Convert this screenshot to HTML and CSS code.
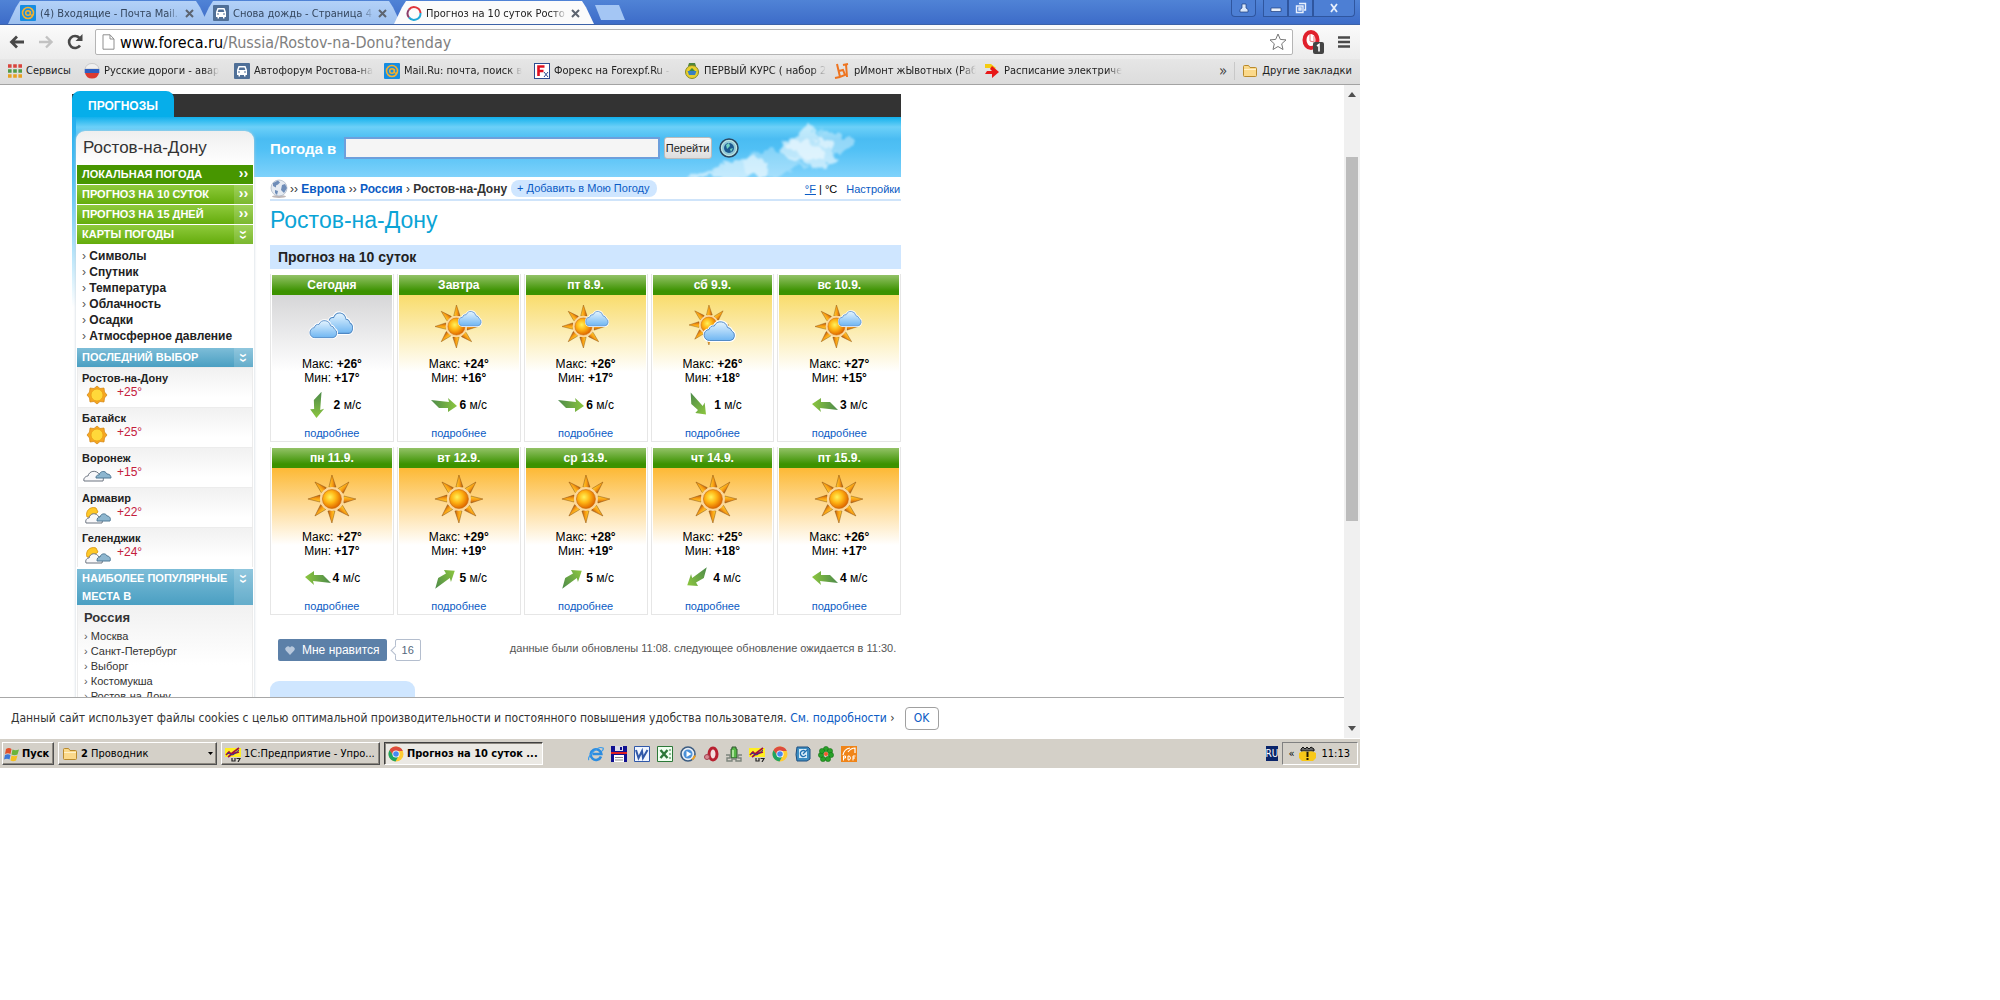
FILE: index.html
```html
<!DOCTYPE html>
<html lang="ru">
<head>
    <meta charset="UTF-8">
    <meta name="viewport" content="width=device-width, initial-scale=1.0">
    <title>Прогноз на 10 суток Ростов-на-Дону</title>
    <link rel="stylesheet" href="styles.css">
</head>
<body>
    <!-- shared icons -->
    <svg class="defs" width="0" height="0" aria-hidden="true">
        <defs>
            <radialGradient id="gSun" cx="0.4" cy="0.4" r="0.6"><stop offset="0" stop-color="#fff25a"/><stop offset="0.5" stop-color="#ffb414"/><stop offset="1" stop-color="#e06a00"/></radialGradient>
            <linearGradient id="gCloud" x1="0" y1="0" x2="0" y2="1"><stop offset="0" stop-color="#e4f4ff"/><stop offset="1" stop-color="#6fb6f2"/></linearGradient>
            <linearGradient id="gArrow" x1="0" y1="0" x2="1" y2="0"><stop offset="0" stop-color="#4d8a4a"/><stop offset="1" stop-color="#8cc63f"/></linearGradient>
            <linearGradient id="gRay" x1="0" y1="0" x2="1" y2="0"><stop offset="0" stop-color="#ffd02e"/><stop offset="0.55" stop-color="#f79a12"/><stop offset="1" stop-color="#b45a10"/></linearGradient>
            <filter id="wisp" x="-10%" y="-10%" width="120%" height="120%">
                <feTurbulence type="fractalNoise" baseFrequency="0.09" numOctaves="3" seed="4"/>
                <feDisplacementMap in="SourceGraphic" scale="14" xChannelSelector="R" yChannelSelector="G"/>
                <feGaussianBlur stdDeviation="1"/>
            </filter>
        </defs>
        <symbol id="sun" viewBox="0 0 48 48">
            <path id="r1" d="M24 0l4 12q-4 2-7 0z" fill="url(#gRay)" stroke="#8a5010" stroke-width=".5"/>
            <use href="#r1" transform="rotate(45 24 24)"/><use href="#r1" transform="rotate(90 24 24)"/><use href="#r1" transform="rotate(135 24 24)"/><use href="#r1" transform="rotate(180 24 24)"/><use href="#r1" transform="rotate(225 24 24)"/><use href="#r1" transform="rotate(270 24 24)"/><use href="#r1" transform="rotate(315 24 24)"/>
            <circle cx="24" cy="24" r="12" fill="#fbd79a"/>
            <circle cx="24" cy="24" r="9.500" fill="url(#gSun)" stroke="#c8690a" stroke-width=".6"/>
        </symbol>
        <symbol id="cloud" viewBox="0 0 36 22" preserveAspectRatio="none">
            <path d="M7 20.500a5.500 5.500 0 0 1-.5-11A5 5 0 0 1 12 6a7.500 7.500 0 0 1 14 1.500 5 5 0 0 1 4.500 3.500 5 5 0 0 1-1.500 9.500z" fill="url(#gCloud)" stroke="#fff" stroke-width="3"/>
            <path d="M7 20.500a5.500 5.500 0 0 1-.5-11A5 5 0 0 1 12 6a7.500 7.500 0 0 1 14 1.500 5 5 0 0 1 4.500 3.500 5 5 0 0 1-1.500 9.500z" fill="url(#gCloud)" stroke="#4f88c4" stroke-width="1"/>
        </symbol>
        <symbol id="w-clouds" viewBox="0 0 48 48">
            <use href="#cloud" x="15" y="9" width="32" height="24"/>
            <use href="#cloud" x="1" y="17" width="30" height="20"/>
        </symbol>
        <symbol id="w-fair" viewBox="0 0 48 48">
            <use href="#sun" x="0" y="3" width="43" height="43"/>
            <use href="#cloud" x="23" y="8" width="25" height="17"/>
        </symbol>
        <symbol id="w-partly" viewBox="0 0 48 48">
            <use href="#sun" x="0" y="3" width="40" height="40"/>
            <use href="#cloud" x="14" y="18" width="34" height="22"/>
        </symbol>
        <symbol id="arrow" viewBox="0 0 28 28"><path d="M1 9l18 2-1-4 9 8-9 6v-4l-9 0z" fill="url(#gArrow)"/></symbol>
        <symbol id="s-sun" viewBox="0 0 30 20">
            <path d="M15 1l3 2.500 4-.5.5 4 2.500 3-2.500 3-.5 4-4-.5-3 2.500-3-2.500-4 .5-.5-4-2.500-3 2.500-3 .5-4 4 .5z" fill="#f5a623" stroke="#d18410" stroke-width=".7"/>
            <circle cx="15" cy="10" r="6" fill="#ffd83a" stroke="#e89a10" stroke-width=".7"/>
        </symbol>
        <symbol id="s-clouds" viewBox="0 0 30 20">
            <path d="M2 16c-1-3 2-5 4-5 1-5 8-7 12-1 3 0 4 3 3 6z" fill="#f8f8fa" stroke="#6c7480" stroke-width="1"/>
            <path d="M14 13c0-3 2-3 3-3 1-4 6-5 8-1 3 0 4 2 4 4z" fill="#8db6cf" stroke="#4f7894" stroke-width="1"/>
        </symbol>
        <symbol id="s-partly" viewBox="0 0 30 20">
            <path d="M5 12c-2-6 3-11 9-9l2 4-6 5z" fill="#ffc928" stroke="#d6920c" stroke-width=".8"/>
            <path d="M4 18c-1-3 1-5 3-5 1-5 7-6 10-1 3 0 4 3 3 6z" fill="#f8f8fa" stroke="#6c7480"/>
            <path d="M15 16c0-3 1-4 3-4 1-4 6-4 7-1 3 0 4 3 3 5z" fill="#8db6cf" stroke="#4f7894"/>
        </symbol>
        <symbol id="mailru" viewBox="0 0 16 16"><rect width="16" height="16" rx="1" fill="#168de2"/><circle cx="8" cy="8" r="5.500" fill="none" stroke="#f5b12e" stroke-width="1.600"/><circle cx="8" cy="8" r="2.300" fill="none" stroke="#f5b12e" stroke-width="1.500"/><path d="M10.500 6v3.500q1 1.500 2.500 0" fill="none" stroke="#f5b12e" stroke-width="1.300"/></symbol>
        <symbol id="car" viewBox="0 0 16 16"><rect width="16" height="16" rx="1" fill="#4f6f97"/><path d="M4.500 3h7l1.500 4v5h-1.500v1.500H10V12H6v1.500H4.500V12H3V7z" fill="#fff"/><path d="M5.500 4.500h5l.8 2.500H4.700z" fill="#4f6f97"/><path d="M4 9h2M10 9h2" stroke="#4f6f97"/></symbol>
        <symbol id="chrome" viewBox="0 0 16 16"><circle cx="8" cy="8" r="7.500" fill="#fc3"/><path d="M1.500 4.200A7.500 7.500 0 0 1 14.800 5H8L5 9.500z" fill="#dd4b3e"/><path d="M1.500 4.200A7.500 7.500 0 0 0 7.500 15.500L10.500 10 5 9z" fill="#1da462"/><circle cx="8" cy="8" r="3.600" fill="#fff"/><circle cx="8" cy="8" r="2.800" fill="#4688f1"/></symbol>
        <symbol id="folder" viewBox="0 0 16 16"><path d="M1.500 3.500q0-1 1-1h4l1.500 2h5.500q1 0 1 1v7q0 1-1 1h-11q-1 0-1-1z" fill="#fbd98a" stroke="#b98a2c"/><path d="M2 6.500h12" stroke="#fff1c8"/></symbol>
        <symbol id="onec" viewBox="0 0 16 16"><path d="M0 2h16v9H0z" fill="#ffee22"/><path d="M1 9l3-3 2 2 8-6M3 11l4-3 7-2" fill="none" stroke="#a01040" stroke-width="1.700"/><path d="M2 7l6 2 6-5" fill="none" stroke="#303090"/><path d="M7 12v3h3v-3M11.500 12.500H15L13 16" fill="none" stroke="#222" stroke-width="1.200"/></symbol>
    </svg>

    <div class="screen">
        <header class="titlebar">
            <div class="tab">
                <svg width="16" height="16"><use href="#mailru"/></svg>
                <span class="tab-text">(4) Входящие - Почта Mail.</span>
                <button class="tab-close" aria-label="Закрыть"><svg width="9" height="9" viewBox="0 0 9 9"><path d="M1 1l7 7M8 1L1 8" stroke="#5c6470" stroke-width="2"/></svg></button>
            </div>
            <div class="tab">
                <svg width="16" height="16"><use href="#car"/></svg>
                <span class="tab-text">Снова дождь - Страница 4</span>
                <button class="tab-close" aria-label="Закрыть"><svg width="9" height="9" viewBox="0 0 9 9"><path d="M1 1l7 7M8 1L1 8" stroke="#5c6470" stroke-width="2"/></svg></button>
            </div>
            <div class="tab active">
                <svg width="16" height="16" viewBox="0 0 16 16"><path d="M3 4.500A6.500 6.500 0 0 1 14.500 8" fill="none" stroke="#e0343c" stroke-width="2"/><path d="M14.500 8A6.500 6.500 0 0 1 3 12.500" fill="none" stroke="#1fa8d8" stroke-width="2"/><path d="M3 12.500a6.500 6.500 0 0 1 0-8" fill="none" stroke="#8a3c6a" stroke-width="2"/></svg>
                <span class="tab-text">Прогноз на 10 суток Росто</span>
                <button class="tab-close" aria-label="Закрыть"><svg width="9" height="9" viewBox="0 0 9 9"><path d="M1 1l7 7M8 1L1 8" stroke="#5c6470" stroke-width="2"/></svg></button>
            </div>
            <button class="new-tab" aria-label="Новая вкладка"></button>
            <div class="window-buttons">
                <button class="win user" aria-label="Профиль"><svg width="10" height="10" viewBox="0 0 10 10"><path d="M3 1h4v4l2 1.500V9H1V6.500L3 5z" fill="#dbe8fb" stroke="#1c3c7c" stroke-width=".7"/></svg></button>
                <button class="win" aria-label="Свернуть"><svg width="12" height="10" viewBox="0 0 12 10"><path d="M1 5h10v3.500H1z" fill="#e8f0fc" stroke="#1c3c7c" stroke-width=".7"/></svg></button>
                <button class="win" aria-label="Восстановить"><svg width="12" height="12" viewBox="0 0 12 12"><path d="M4 1.500h6.500V8H9M1.500 4H8v6.500H1.500zM4 6h2v2H4z" fill="none" stroke="#e8f0fc" stroke-width="1.400"/></svg></button>
                <button class="win close" aria-label="Закрыть окно"><svg width="10" height="10" viewBox="0 0 10 10"><path d="M2 1l6 8M8 1L2 9" stroke="#e8f0fc" stroke-width="1.800"/></svg></button>
            </div>
        </header>

        <div class="toolbar">
            <button class="nav-btn" aria-label="Назад"><svg width="18" height="18" viewBox="0 0 18 18"><path d="M16 9H3.500M9 3.500L3.500 9 9 14.500" fill="none" stroke="#484848" stroke-width="2.800"/></svg></button>
            <button class="nav-btn" aria-label="Вперёд"><svg width="18" height="18" viewBox="0 0 18 18"><path d="M2 9h12.500M9 3.500l5.500 5.500L9 14.500" fill="none" stroke="#c2c2c2" stroke-width="2.400"/></svg></button>
            <button class="nav-btn" aria-label="Обновить"><svg width="18" height="18" viewBox="0 0 18 18"><path d="M14 12.500A6 6 0 1 1 13.500 5" fill="none" stroke="#484848" stroke-width="2.600"/><path d="M16.500 1v7h-7z" fill="#484848"/></svg></button>
            <div class="urlbar">
                <svg width="13" height="16" viewBox="0 0 13 16"><path d="M1 .8h7L12 5v10.200H1zM8 .8V5h4" fill="#fff" stroke="#8f8f8f"/></svg>
                <a class="url" href="#">www.foreca.ru<span>/Russia/Rostov-na-Donu?tenday</span></a>
                <svg width="18" height="18" viewBox="0 0 18 18"><path d="M9 1l2.300 5.400 5.700.5-4.300 3.900 1.300 5.700L9 13.500l-5 3 1.300-5.700L1 6.900l5.700-.5z" fill="#fff" stroke="#777"/></svg>
            </div>
            <button class="nav-btn ext" aria-label="Расширение"><svg width="24" height="24" viewBox="0 0 24 24"><ellipse cx="10" cy="10" rx="6.500" ry="8" fill="#fff" stroke="#e0202c" stroke-width="4"/><path d="M9 4v7l4 1V6" fill="#fff" stroke="#e87078"/><rect x="12" y="12" width="11" height="12" rx="2" fill="#444"/><path d="M16 16l2-1.500v7" fill="none" stroke="#fff" stroke-width="1.600"/></svg></button>
            <button class="nav-btn menu" aria-label="Меню"><svg width="14" height="14" viewBox="0 0 14 14"><path d="M1 2.500h12M1 7h12M1 11.500h12" stroke="#4a4a4a" stroke-width="2.600"/></svg></button>
        </div>

        <nav class="bookmarks">
            <a class="apps" href="#"><svg width="14" height="14" viewBox="0 0 14 14"><path d="M0 2h14" stroke="#d9443c" stroke-width="3.600" stroke-dasharray="3.600 1.600"/><path d="M0 7h14" stroke="#4f9a48" stroke-width="3.600" stroke-dasharray="3.600 1.600"/><path d="M0 12h14" stroke="#e8a020" stroke-width="3.600" stroke-dasharray="3.600 1.600"/></svg><span>Сервисы</span></a>
            <a href="#"><svg width="16" height="16" viewBox="0 0 16 16"><path d="M1 6a7.200 7.200 0 0 1 14 0z" fill="#f0f0f0" stroke="#aaa" stroke-width=".5"/><path d="M.7 6h14.600v4H.7z" fill="#2f5fc0"/><path d="M1 10h14a7.200 7.200 0 0 1-14 0z" fill="#dc3a30"/></svg><span>Русские дороги - авар</span></a>
            <a href="#"><svg width="16" height="16"><use href="#car"/></svg><span>Автофорум Ростова-на</span></a>
            <a href="#"><svg width="16" height="16"><use href="#mailru"/></svg><span>Mail.Ru: почта, поиск в</span></a>
            <a href="#"><svg width="16" height="16" viewBox="0 0 16 16"><rect x=".5" y=".5" width="15" height="15" fill="#fff" stroke="#2c4c90"/><path d="M4.500 13V3.500h6M4.500 8h5" fill="none" stroke="#e01020" stroke-width="2.600"/><path d="M10 9l4 5M14 9l-4 5" stroke="#2c4c90"/></svg><span>Форекс на Forexpf.Ru -</span></a>
            <a href="#"><svg width="16" height="16" viewBox="0 0 16 16"><path d="M5 0h6l1 3H4z" fill="#50853c"/><circle cx="8" cy="9" r="6.500" fill="#e9cf2d" stroke="#8a8a20"/><path d="M3.500 8h9l-1.500 4H5z" fill="#3a80c0"/><path d="M8 5l3 3H5z" fill="#3c8a40"/></svg><span>ПЕРВЫЙ КУРС ( набор 2</span></a>
            <a href="#"><svg width="16" height="16" viewBox="0 0 16 16"><path d="M3 1l3 13 5-2-2-5-4 1M12 1l1 13M9 2l5-1M1 15l5-1" fill="none" stroke="#ee7420" stroke-width="2"/></svg><span>рИмонт жЫвотных (Раб</span></a>
            <a href="#"><svg width="16" height="16" viewBox="0 0 16 16"><path d="M1 1h6l5 4-3 2-3-2H1z" fill="#f5cc10"/><path d="M8 3l7 6-7 6v-4H1l2-3h5l-2-2z" fill="#e81818"/></svg><span>Расписание электриче</span></a>
            <button class="more" aria-label="Ещё">»</button>
            <a class="other" href="#"><svg width="16" height="16"><use href="#folder"/></svg><span>Другие закладки</span></a>
        </nav>

        <div class="viewport">
            <div class="page">
                <div class="site">
                    <nav class="topnav"><a href="#">ПРОГНОЗЫ</a></nav>
                    <div class="layout">
                        <aside class="sidebar">
                            <h2>Ростов-на-Дону</h2>
                            <ul class="menu-bars">
                                <li class="current"><a href="#">ЛОКАЛЬНАЯ ПОГОДА</a><i>››</i></li>
                                <li><a href="#">ПРОГНОЗ НА 10 СУТОК</a><i>››</i></li>
                                <li><a href="#">ПРОГНОЗ НА 15 ДНЕЙ</a><i>››</i></li>
                                <li><a href="#">КАРТЫ ПОГОДЫ</a><i class="down">››</i></li>
                            </ul>
                            <ul class="maps">
                                <li><a href="#">Символы</a></li>
                                <li><a href="#">Спутник</a></li>
                                <li><a href="#">Температура</a></li>
                                <li><a href="#">Облачность</a></li>
                                <li><a href="#">Осадки</a></li>
                                <li><a href="#">Атмосферное давление</a></li>
                            </ul>
                            <h3 class="blue-bar"><span>ПОСЛЕДНИЙ ВЫБОР</span><i class="down">››</i></h3>
                            <ul class="cities">
                                <li><a href="#">Ростов-на-Дону</a><div><svg width="30" height="20"><use href="#s-sun"/></svg><b>+25°</b></div></li>
                                <li><a href="#">Батайск</a><div><svg width="30" height="20"><use href="#s-sun"/></svg><b>+25°</b></div></li>
                                <li><a href="#">Воронеж</a><div><svg width="30" height="20"><use href="#s-clouds"/></svg><b>+15°</b></div></li>
                                <li><a href="#">Армавир</a><div><svg width="30" height="20"><use href="#s-partly"/></svg><b>+22°</b></div></li>
                                <li><a href="#">Геленджик</a><div><svg width="30" height="20"><use href="#s-partly"/></svg><b>+24°</b></div></li>
                            </ul>
                            <h3 class="blue-bar tall"><span>НАИБОЛЕЕ ПОПУЛЯРНЫЕ МЕСТА В</span><i class="down">››</i></h3>
                            <div class="popular">
                                <h4>Россия</h4>
                                <ul>
                                    <li><a href="#">Москва</a></li>
                                    <li><a href="#">Санкт-Петербург</a></li>
                                    <li><a href="#">Выборг</a></li>
                                    <li><a href="#">Костомукша</a></li>
                                    <li><a href="#">Ростов-на-Дону</a></li>
                                </ul>
                            </div>
                        </aside>

                        <main class="content">
                            <form class="search">
                                <svg class="sky-cloud" width="220" height="56" viewBox="0 0 220 56">
                                    <g fill="#fff" filter="url(#wisp)">
                                        <path opacity=".55" d="M6 56q12-7 28-5 12-16 34-14 14-2 20 6l-4 13z"/>
                                        <path opacity=".3" d="M60 40q16-12 36-10 20 4 30 14l-30 12H70z"/>
                                        <path opacity=".6" d="M98 26q8-8 16-9 4-10 12-14 8 4 10 12 14 2 16 12 4 8-2 16-14 8-26-2-12-2-18-6 -6-4-8-9z"/>
                                        <path opacity=".4" d="M136 10q10-4 18 4 14 0 18 8-6 8-14 10-12-2-22-10z"/>
                                        <path opacity=".5" d="M104 24q16-10 30 0 12 4 10 14-16 2-26-4z"/>
                                    </g>
                                </svg>
                                <label for="place">Погода в</label>
                                <input type="text" id="place" autofocus>
                                <button type="button">Перейти</button>
                                <svg class="locate" width="20" height="20" viewBox="0 0 20 20"><circle cx="10" cy="10" r="9" fill="#90c8d8" stroke="#2c4860" stroke-width="1.500"/><circle cx="10" cy="10" r="7.500" fill="none" stroke="#c8e8e0"/><circle cx="10" cy="10" r="5" fill="#1c5a90"/><path d="M7 7l3-2 1 3-3 3zM11 11l3-1-2 4z" fill="#6fd0c0"/></svg>
                            </form>

                            <div class="crumbs">
                                <svg width="18" height="20" viewBox="0 0 18 20"><ellipse cx="9" cy="17.500" rx="7" ry="1.500" fill="#c0b8b8"/><circle cx="9" cy="9" r="8" fill="#e6ebf2" stroke="#a9b4c4" stroke-width=".7"/><path d="M3 4l5-2.500 2 2-2 2-2 1v2L3 7zM12 6l3-1 2 4-3 5-3-3zM5 11l3 1-1 4-2-2z" fill="#6f8db8"/></svg>
                                <p>›› <a href="#">Европа</a> ›› <a href="#">Россия</a> › <b>Ростов-на-Дону</b></p>
                                <a class="add" href="#">+ Добавить в Мою Погоду</a>
                                <div class="units"><a class="f" href="#">°F</a> | <span>°C</span><a class="settings" href="#">Настройки</a></div>
                            </div>

                            <h1>Ростов-на-Дону</h1>
                            <h2 class="section">Прогноз на 10 суток</h2>

                            <div class="days">
                                <article class="day cloudy">
                                    <h3>Сегодня</h3>
                                    <svg class="sky" width="48" height="48"><use href="#w-clouds"/></svg>
                                    <p>Макс: <b>+26°</b><br>Мин: <b>+17°</b></p>
                                    <div class="wind wide"><svg class="s" width="28" height="28"><use href="#arrow"/></svg><span><b>2</b> м/с</span></div>
                                    <a href="#">подробнее</a>
                                </article>
                                <article class="day fair">
                                    <h3>Завтра</h3>
                                    <svg class="sky" width="48" height="48"><use href="#w-fair"/></svg>
                                    <p>Макс: <b>+24°</b><br>Мин: <b>+16°</b></p>
                                    <div class="wind"><svg class="e" width="28" height="28"><use href="#arrow"/></svg><span><b>6</b> м/с</span></div>
                                    <a href="#">подробнее</a>
                                </article>
                                <article class="day fair">
                                    <h3>пт 8.9.</h3>
                                    <svg class="sky" width="48" height="48"><use href="#w-fair"/></svg>
                                    <p>Макс: <b>+26°</b><br>Мин: <b>+17°</b></p>
                                    <div class="wind"><svg class="e" width="28" height="28"><use href="#arrow"/></svg><span><b>6</b> м/с</span></div>
                                    <a href="#">подробнее</a>
                                </article>
                                <article class="day fair">
                                    <h3>сб 9.9.</h3>
                                    <svg class="sky" width="48" height="48"><use href="#w-partly"/></svg>
                                    <p>Макс: <b>+26°</b><br>Мин: <b>+18°</b></p>
                                    <div class="wind wide"><svg class="se" width="28" height="28"><use href="#arrow"/></svg><span><b>1</b> м/с</span></div>
                                    <a href="#">подробнее</a>
                                </article>
                                <article class="day fair">
                                    <h3>вс 10.9.</h3>
                                    <svg class="sky" width="48" height="48"><use href="#w-fair"/></svg>
                                    <p>Макс: <b>+27°</b><br>Мин: <b>+15°</b></p>
                                    <div class="wind"><svg class="w" width="28" height="28"><use href="#arrow"/></svg><span><b>3</b> м/с</span></div>
                                    <a href="#">подробнее</a>
                                </article>
                                <article class="day sunny">
                                    <h3>пн 11.9.</h3>
                                    <svg class="sky" width="48" height="48"><use href="#sun"/></svg>
                                    <p>Макс: <b>+27°</b><br>Мин: <b>+17°</b></p>
                                    <div class="wind"><svg class="w" width="28" height="28"><use href="#arrow"/></svg><span><b>4</b> м/с</span></div>
                                    <a href="#">подробнее</a>
                                </article>
                                <article class="day sunny">
                                    <h3>вт 12.9.</h3>
                                    <svg class="sky" width="48" height="48"><use href="#sun"/></svg>
                                    <p>Макс: <b>+29°</b><br>Мин: <b>+19°</b></p>
                                    <div class="wind"><svg class="ne" width="28" height="28"><use href="#arrow"/></svg><span><b>5</b> м/с</span></div>
                                    <a href="#">подробнее</a>
                                </article>
                                <article class="day sunny">
                                    <h3>ср 13.9.</h3>
                                    <svg class="sky" width="48" height="48"><use href="#sun"/></svg>
                                    <p>Макс: <b>+28°</b><br>Мин: <b>+19°</b></p>
                                    <div class="wind"><svg class="ne" width="28" height="28"><use href="#arrow"/></svg><span><b>5</b> м/с</span></div>
                                    <a href="#">подробнее</a>
                                </article>
                                <article class="day sunny">
                                    <h3>чт 14.9.</h3>
                                    <svg class="sky" width="48" height="48"><use href="#sun"/></svg>
                                    <p>Макс: <b>+25°</b><br>Мин: <b>+18°</b></p>
                                    <div class="wind"><svg class="sw" width="28" height="28"><use href="#arrow"/></svg><span><b>4</b> м/с</span></div>
                                    <a href="#">подробнее</a>
                                </article>
                                <article class="day sunny">
                                    <h3>пт 15.9.</h3>
                                    <svg class="sky" width="48" height="48"><use href="#sun"/></svg>
                                    <p>Макс: <b>+26°</b><br>Мин: <b>+17°</b></p>
                                    <div class="wind"><svg class="w" width="28" height="28"><use href="#arrow"/></svg><span><b>4</b> м/с</span></div>
                                    <a href="#">подробнее</a>
                                </article>
                            </div>

                            <div class="below">
                                <button class="like"><svg width="10" height="9" viewBox="0 0 10 9"><path d="M5 9L.8 4.500A2.500 2.500 0 0 1 5 1.500a2.500 2.500 0 0 1 4.200 3z" fill="#b8c8dc"/></svg>Мне нравится</button>
                                <span class="count">16</span>
                                <p>данные были обновлены 11:08. следующее обновление ожидается в 11:30.</p>
                            </div>
                            <div class="panel"></div>
                        </main>
                    </div>
                </div>

                <div class="cookies">
                    <span>Данный сайт использует файлы cookies с целью оптимальной производительности и постоянного повышения удобства пользователя. <a href="#">См. подробности</a> ›</span>
                    <button>OK</button>
                </div>
            </div>

            <div class="scrollbar">
                <svg width="8" height="5" viewBox="0 0 8 5"><path d="M4 0l4 5H0z" fill="#505050"/></svg>
                <div class="track"><div class="thumb"></div></div>
                <svg width="8" height="5" viewBox="0 0 8 5"><path d="M4 5L0 0h8z" fill="#505050"/></svg>
            </div>
        </div>

        <footer class="taskbar">
            <button class="start"><svg width="16" height="16" viewBox="0 0 16 16"><path d="M2 3q3-2 5.500 0L6.500 8Q4 6.500 1 8z" fill="#e0502c"/><path d="M8.500 3.500q3 1.500 6.500 0l-1.500 5q-3 1.500-6 0z" fill="#6ab43c"/><path d="M1 9q3-1.500 5.500 0l-1 4.500Q3 12 0 13.500z" fill="#3c78d8"/><path d="M7.500 9.500q3 1.500 6 0L12 14.500q-3 1.500-5.500 0z" fill="#f5c020"/></svg>Пуск</button>
            <button class="task group"><svg width="16" height="16"><use href="#folder"/></svg><span><b>2</b> Проводник</span><svg class="drop" width="5" height="3" viewBox="0 0 5 3"><path d="M0 0h5L2.500 3z"/></svg></button>
            <button class="task"><svg width="16" height="16"><use href="#onec"/></svg><span>1С:Предприятие - Упро...</span></button>
            <button class="task pressed"><svg width="16" height="16"><use href="#chrome"/></svg><span>Прогноз на 10 суток ...</span></button>
            <div class="quick">
                <svg width="16" height="16" viewBox="0 0 16 16"><path d="M13 10.500A5.300 5.300 0 1 1 13.300 8H4.500" fill="none" stroke="#2c8ce0" stroke-width="2.600"/><path d="M1 14Q-1 12 5 6t10-4q1 1-1 3" fill="none" stroke="#3c9cec" stroke-width="1.200"/></svg>
                <svg width="16" height="16" viewBox="0 0 16 16"><path d="M0 0h16v16H0z" fill="#101090"/><path d="M4 0h8v5H4z" fill="#dcdce8"/><path d="M9 1h2v3H9z" fill="#101090"/><path d="M0 7h16" stroke="#e02020" stroke-width="2"/><path d="M3 9h10v7H3z" fill="#fff"/><path d="M4 11.500h8M4 14h8" stroke="#888"/></svg>
                <svg width="16" height="16" viewBox="0 0 16 16"><path d="M.5.5h15v15H.5z" fill="#f0f5ff" stroke="#3058a8"/><path d="M2 4l2.500 8L8 5l1 7 4.500-8" fill="none" stroke="#3058a8" stroke-width="2"/></svg>
                <svg width="16" height="16" viewBox="0 0 16 16"><path d="M.5.5h15v15H.5z" fill="#f0fff0" stroke="#2c7838"/><path d="M3.500 4l7 8M10.500 4l-7 8" stroke="#2c7838" stroke-width="2.400"/><path d="M12 4h2M12 8h2M12 12h2" stroke="#2c7838"/></svg>
                <svg width="16" height="16" viewBox="0 0 16 16"><circle cx="8" cy="8" r="7" fill="#e8eef6" stroke="#3c5c80" stroke-width="1.600"/><circle cx="8" cy="8" r="4.500" fill="#4a90d8"/><path d="M6.500 5l5 3-5 3z" fill="#fff"/><path d="M12 13.500a7 7 0 0 0 3-4" stroke="#f0a020" stroke-width="2"/></svg>
                <svg width="16" height="16" viewBox="0 0 16 16"><ellipse cx="10" cy="8" rx="4" ry="6" fill="#f3e0e0" stroke="#b82030" stroke-width="3"/><circle cx="4" cy="11" r="2.500" fill="#d88890" stroke="#a04050"/></svg>
                <svg width="16" height="16" viewBox="0 0 16 16"><path d="M5 3h1V1h4v2h1v9H5z" fill="#58b848" stroke="#305830"/><path d="M7 4v7" stroke="#c8f0b8" stroke-width="1.500"/><path d="M0 9h4v3H1v3h5v-2h4v2h5v-3h-3V9h4" fill="none" stroke="#7c847c" stroke-width="1.400"/></svg>
                <svg width="16" height="16"><use href="#onec"/></svg>
                <svg width="16" height="16"><use href="#chrome"/></svg>
                <svg width="16" height="16" viewBox="0 0 16 16"><path d="M2 1h11l2 2v10l-3 2H2q-2-6 0-14z" fill="#3c8cc0" stroke="#205080"/><path d="M4 3h8v9H4z" fill="#d8ecf8"/><path d="M10 5a3 3 0 1 0 1 4M8 8l5-5" fill="none" stroke="#2070b0" stroke-width="1.300"/></svg>
                <svg width="16" height="16" viewBox="0 0 16 16"><g fill="#28a028" stroke="#106810" stroke-width=".5"><circle cx="8" cy="3" r="2.600"/><circle cx="12" cy="5" r="2.600"/><circle cx="13" cy="9" r="2.600"/><circle cx="10" cy="13" r="2.600"/><circle cx="5" cy="13" r="2.600"/><circle cx="3" cy="9" r="2.600"/><circle cx="4" cy="5" r="2.600"/></g><circle cx="8" cy="8" r="2" fill="#f85828"/></svg>
                <svg width="16" height="16" viewBox="0 0 16 16"><path d="M0 0h16v16H0z" fill="#f08418"/><path d="M2 9q1-6 7-7M7 6q3-4 7-4v5" fill="none" stroke="#fff" stroke-width="1.200"/><path d="M2.500 14.500V10h2v2h-2M7 10v4h1.500l1-2-1-2zM12 14.500V10h2.500M12 12h2" fill="none" stroke="#fff"/></svg>
            </div>
            <span class="lang">RU</span>
            <div class="tray">
                <span>«</span>
                <svg width="17" height="17" viewBox="0 0 17 17"><path d="M2 4l2-2 2 2 2-2 2 2 2-2 3 2v2H2z" fill="#666" stroke="#111"/><path d="M0 8q4-3 8.500-1Q13 5 17 8v5l-3 3H3l-3-3z" fill="#f8c818"/><path d="M8.500 7v5M8.500 13v2" stroke="#221800" stroke-width="2"/></svg>
                <time>11:13</time>
            </div>
        </footer>
    </div>
</body>
</html>
```

FILE: styles.css
```css
* {
    box-sizing: border-box;
}
body {
    margin: 0;
    background: #fff;
    font-family: "Liberation Sans", Arial, sans-serif;
    font-size: 12px;
    color: #333;
}
h1, h2, h3, h4, p, ul {
    margin: 0;
    padding: 0;
}
ul {
    list-style: none;
}
a {
    color: #0b5bc4;
    text-decoration: none;
}
button {
    font-family: inherit;
    padding: 0;
    cursor: pointer;
}
svg {
    flex: none;
}
.defs {
    position: absolute;
}
.screen {
    display: flex;
    flex-direction: column;
    width: 68%;
    height: 76.8vh;
    overflow: hidden;
}

/* browser chrome */
.titlebar, .toolbar, .bookmarks, .taskbar {
    flex: none;
    font-family: "DejaVu Sans Condensed", "DejaVu Sans", Tahoma, sans-serif;
    font-size: 11px;
    color: #222;
}
.titlebar {
    display: flex;
    height: 25px;
    padding-left: 8px;
    background: linear-gradient(#5083d6, #3d6cc8);
    border-bottom: 1px solid #3c62a8;
}
.tab {
    display: flex;
    align-items: center;
    gap: 4px;
    width: 200px;
    height: 24px;
    margin-right: -7px;
    padding: 2px 9px 0 12px;
    background: linear-gradient(#b4d2f8, #9dc0ef);
    clip-path: polygon(0 100%, 4% 30%, 6% 4%, 94% 4%, 96% 30%, 100% 100%);
    color: #34465e;
}
.tab.active {
    z-index: 1;
    background: #fbfbfb;
    color: #222;
}
.tab-text {
    flex: 1;
    overflow: hidden;
    white-space: nowrap;
    mask-image: linear-gradient(to right, #000 90%, transparent);
}
.tab-close {
    display: flex;
    width: 14px;
    border: 0;
    background: none;
}
.new-tab {
    width: 30px;
    height: 15px;
    margin: 5px 0 0 8px;
    border: 0;
    background: #a4c6f4;
    clip-path: polygon(0 0, 80% 0, 100% 100%, 20% 100%);
}
.window-buttons {
    display: flex;
    height: 17px;
    margin-left: auto;
    padding-right: 5px;
}
.win {
    display: flex;
    align-items: center;
    justify-content: center;
    width: 25px;
    border: 1px solid #2f569f;
    border-top: 0;
    background: #4d7fd4;
}
.win.user {
    margin-right: 7px;
    border-radius: 0 0 4px 4px;
}
.win.close {
    width: 42px;
    border-radius: 0 0 4px 0;
}
.toolbar {
    display: flex;
    align-items: center;
    height: 34px;
    padding: 0 7px 0 8px;
    background: linear-gradient(#fbfbfb, #ececec);
}
.nav-btn {
    display: flex;
    width: 29px;
    border: 0;
    background: none;
}
.urlbar {
    display: flex;
    align-items: center;
    flex: 1;
    gap: 5px;
    height: 26px;
    padding: 0 5px 0 6px;
    border: 1px solid #b5b5b5;
    border-radius: 2px;
    background: #fff;
}
.url {
    flex: 1;
    color: #000;
    font-size: 16px;
}
.url span {
    color: #808080;
}
.nav-btn.ext {
    width: 28px;
    margin-left: 8px;
}
.nav-btn.menu {
    width: 16px;
    margin-left: 8px;
}
.bookmarks {
    display: flex;
    align-items: center;
    height: 26px;
    padding: 0 8px 2px;
    background: linear-gradient(#e6e6e6, #dcdcdc);
    border-bottom: 1px solid #a3a3a3;
}
.bookmarks a {
    display: flex;
    align-items: center;
    gap: 4px;
    width: 150px;
    padding-right: 8px;
    color: #222;
    white-space: nowrap;
}
.bookmarks a span {
    overflow: hidden;
    mask-image: linear-gradient(to right, #000 88%, transparent);
}
.bookmarks .apps {
    width: 76px;
    padding-right: 0;
}
.bookmarks .apps span, .bookmarks .other span {
    mask-image: none;
}
.more {
    margin-left: auto;
    padding: 0 7px;
    border: 0;
    border-right: 1px solid #c8c8c8;
    background: none;
    color: #444;
    font-size: 15px;
}
.bookmarks .other {
    width: auto;
    margin-left: 7px;
    padding: 0;
}

/* web page */
.viewport {
    display: flex;
    flex: 1;
    min-height: 0;
}
.page {
    position: relative;
    flex: 1;
    overflow: hidden;
}
.site {
    width: 61.7%;
    margin: 6px 0 0 72px;
}
.topnav {
    height: 26px;
    background: linear-gradient(#fff 3px, #333 3px);
}
.topnav a {
    display: block;
    width: 102px;
    height: 26px;
    border-radius: 8px 8px 0 0;
    background: #06aeea;
    color: #fff;
    font-size: 12px;
    font-weight: bold;
    line-height: 31px;
    text-align: center;
}
.layout {
    display: flex;
    align-items: flex-start;
    gap: 16px;
    padding: 14px 0 0 4px;
    background:
        linear-gradient(#22aeee, #4fc0f4 60px, #fff 190px) left top / 4px 190px no-repeat,
        linear-gradient(#12b0ec, #6cd0f8 10px, #4abcf2 22px, #50c0f5 32px, #7fd2fb) left top / 100% 60px no-repeat;
}
.sidebar {
    flex: none;
    width: 178px;
    padding: 0 1px;
    border-radius: 9px 9px 0 0;
    background: linear-gradient(#efefef, #fff 34px);
    box-shadow: 0 0 3px #c4ced8;
}
.sidebar h2 {
    padding-left: 6px;
    color: #333;
    font-size: 17px;
    font-weight: normal;
    line-height: 34px;
}
.menu-bars li, .blue-bar {
    display: flex;
    justify-content: space-between;
    min-height: 19px;
    margin-bottom: 1px;
    background: linear-gradient(#8fca3c, #64ac0c);
    color: #fff;
    font-size: 11px;
    font-weight: bold;
    line-height: 18px;
}
.menu-bars .current {
    background: #479600;
}
.menu-bars a, .blue-bar span {
    padding-left: 5px;
    color: #fff;
}
.menu-bars i, .blue-bar i {
    width: 19px;
    background: rgba(255, 255, 255, 0.15);
    font-size: 14px;
    font-style: normal;
    font-weight: bold;
    line-height: 16px;
    text-align: center;
}
.menu-bars .current i {
    background: none;
}
.menu-bars .down, .blue-bar .down {
    writing-mode: vertical-rl;
    line-height: 19px;
    text-align: left;
    padding-top: 5px;
}
.maps {
    padding: 3px 0 4px 5px;
}
.maps li {
    line-height: 16px;
    white-space: nowrap;
}
.maps li::before, .popular li::before {
    content: "› ";
    color: #555;
}
.maps a, .cities a {
    color: #222;
    font-weight: bold;
}
.blue-bar {
    margin: 0;
    background: linear-gradient(#7dbdd8, #4a9fc2);
}
.blue-bar.tall {
    min-height: 36px;
    margin-top: 2px;
}
.cities li {
    height: 40px;
    padding: 4px;
    border: 1px solid #ececec;
    border-bottom: 0;
    background: linear-gradient(#f1f1f1, #fff 30px);
    font-size: 11px;
    line-height: 13px;
}
.cities div {
    display: flex;
    gap: 5px;
}
.cities b {
    color: #c4203c;
    font-size: 12px;
    font-weight: normal;
    line-height: 15px;
}
.popular {
    padding: 4px 6px 40px;
    border: 1px solid #ececec;
    border-top: 0;
    background: linear-gradient(#f1f1f1, #fff 60px);
    font-size: 11px;
    line-height: 15px;
}
.popular h4 {
    margin-bottom: 3px;
    font-size: 13px;
    line-height: 17px;
}
.popular a {
    color: #333;
}
.content {
    flex: 1;
    min-width: 0;
    margin-top: -14px;
}
.search {
    position: relative;
    display: flex;
    align-items: center;
    gap: 4px;
    height: 60px;
    padding-top: 2px;
}
.sky-cloud {
    position: absolute;
    right: 0;
    bottom: 0;
}
.search label {
    width: 70px;
    color: #fff;
    font-size: 15px;
    font-weight: bold;
}
.search input {
    width: 50%;
    height: 22px;
    border: 2px solid #6d9fdc;
    background: #f5f5f5;
    outline: 0;
}
.search button {
    width: 48px;
    height: 22px;
    border: 1px solid #bbb;
    border-radius: 3px;
    background: linear-gradient(#f8f8f8, #ddd);
    color: #222;
    font-size: 11px;
}
.locate {
    margin-left: 3px;
}
.crumbs {
    display: flex;
    align-items: center;
    height: 24px;
    padding-top: 1px;
    border-bottom: 2px solid #cfe4fa;
    line-height: 16px;
    white-space: nowrap;
}
.crumbs p {
    margin: 0 4px 0 2px;
}
.crumbs p a {
    font-weight: bold;
}
.add {
    padding: 0 8px 0 6px;
    border-radius: 8px;
    background: #cfe6ff;
    font-size: 11px;
    line-height: 17px;
}
.units {
    margin-left: auto;
    padding-right: 1px;
    font-size: 11px;
    color: #000;
}
.units .f {
    text-decoration: underline;
}
.settings {
    margin-left: 9px;
}
.content h1 {
    color: #0ba4d6;
    font-size: 23px;
    font-weight: normal;
    line-height: 38px;
}
.section {
    margin: 6px 0 5px;
    padding-left: 8px;
    background: #cfe6ff;
    color: #222;
    font-size: 14px;
    line-height: 24px;
}
.days {
    display: grid;
    grid-template-columns: repeat(5, 1fr);
    gap: 5px 3px;
}
.day {
    display: flex;
    flex-direction: column;
    align-items: center;
    height: 168px;
    border: 1px solid #e6e6e6;
    border-top: 0;
    color: #000;
    line-height: 14px;
}
.day h3 {
    align-self: stretch;
    margin: 1px 1px 0;
    background: linear-gradient(#93c267, #3c9200 80%);
    color: #fff;
    font-size: 12px;
    line-height: 20px;
    text-align: center;
}
.sky {
    align-self: stretch;
    width: auto;
    height: 77px;
    margin: 0 1px;
    padding: 7px 0 22px;
}
.cloudy .sky {
    background: linear-gradient(#d6d6d8, #fff);
}
.fair .sky {
    background: linear-gradient(#f9dc6c, #fff);
}
.sunny .sky {
    background: linear-gradient(#fdb935, #fff);
}
.day p {
    margin-top: -15px;
    text-align: center;
}
.wind {
    display: flex;
    align-items: center;
    gap: 1px;
    height: 28px;
    margin: 6px 0 7px;
}
.wind.wide {
    gap: 3px;
}
.wind .s {
    transform: rotate(88deg);
}
.wind .se {
    transform: rotate(42deg);
}
.wind .ne {
    transform: rotate(-30deg) scaleY(-1);
}
.wind .w {
    transform: rotate(180deg);
}
.wind .sw {
    transform: rotate(150deg) scaleY(-1);
}
.day a {
    font-size: 11px;
}
.below {
    display: flex;
    align-items: center;
    margin: 24px 5px 20px 8px;
    font-size: 11px;
}
.like {
    display: flex;
    align-items: center;
    gap: 7px;
    height: 22px;
    padding: 0 7px;
    border: 0;
    border-radius: 2px;
    background: #5c80a8;
    color: #fff;
    font-size: 12px;
}
.count {
    position: relative;
    margin-left: 8px;
    padding: 0 6px;
    border: 1px solid #b4bece;
    border-radius: 2px;
    color: #55677d;
    line-height: 20px;
}
.count::before {
    content: "";
    position: absolute;
    left: -4px;
    top: 7px;
    width: 6px;
    height: 6px;
    border: 1px solid #b4bece;
    border-width: 0 0 1px 1px;
    background: #fff;
    transform: rotate(45deg);
}
.below p {
    margin: -4px 0 0 auto;
    color: #555;
}
.panel {
    width: 23%;
    height: 60px;
    border-radius: 9px 9px 0 0;
    background: #cfe6ff;
}
.cookies {
    position: absolute;
    left: 0;
    right: 0;
    bottom: 0;
    display: flex;
    align-items: center;
    gap: 10px;
    height: 41px;
    padding-left: 11px;
    border-top: 1px solid #a8a8a8;
    background: #fff;
    font-family: "DejaVu Sans Condensed", "DejaVu Sans", sans-serif;
    font-size: 12px;
    white-space: nowrap;
}
.cookies button {
    width: 34px;
    height: 23px;
    border: 1px solid #a0a0a0;
    border-radius: 4px;
    background: #fff;
    color: #0b5bc4;
    font-size: 12px;
}
.scrollbar {
    display: flex;
    flex-direction: column;
    align-items: center;
    width: 16px;
    padding: 7px 0;
    background: #f0f0f0;
}
.track {
    flex: 1;
    width: 12px;
    padding-top: 60px;
}
.thumb {
    height: 64%;
    background: #bcbcbc;
}

/* taskbar */
.taskbar {
    display: flex;
    align-items: center;
    gap: 4px;
    height: 30px;
    padding: 0 2px;
    border-top: 1px solid #fff;
    background: #d4d0c8;
    color: #000;
}
.taskbar button {
    display: flex;
    align-items: center;
    gap: 3px;
    height: 23px;
    padding: 0 3px;
    border: 1px solid #fff;
    border-color: #fff #505050 #505050 #fff;
    box-shadow: inset -1px -1px #8c8880;
    background: #d4d0c8;
    font-size: 11px;
    color: #000;
    white-space: nowrap;
}
.taskbar .start {
    width: 52px;
    padding: 0 1px;
    gap: 2px;
    font-weight: bold;
}
.taskbar .task {
    width: 159px;
}
.taskbar .pressed {
    border-color: #404040 #fff #fff #404040;
    box-shadow: inset 1px 1px #8c8880;
    background: #ebe9e4;
    font-weight: bold;
}
.drop {
    margin-left: auto;
}
.quick {
    display: flex;
    gap: 7px;
    margin-left: 41px;
}
.lang {
    margin-left: auto;
    background: #0a246a;
    color: #fff;
    font-size: 10px;
    line-height: 15px;
}
.tray {
    display: flex;
    align-items: center;
    gap: 5px;
    height: 23px;
    padding: 0 7px 0 5px;
    border: 1px solid #808080;
    border-color: #808080 #fff #fff #808080;
}
```
